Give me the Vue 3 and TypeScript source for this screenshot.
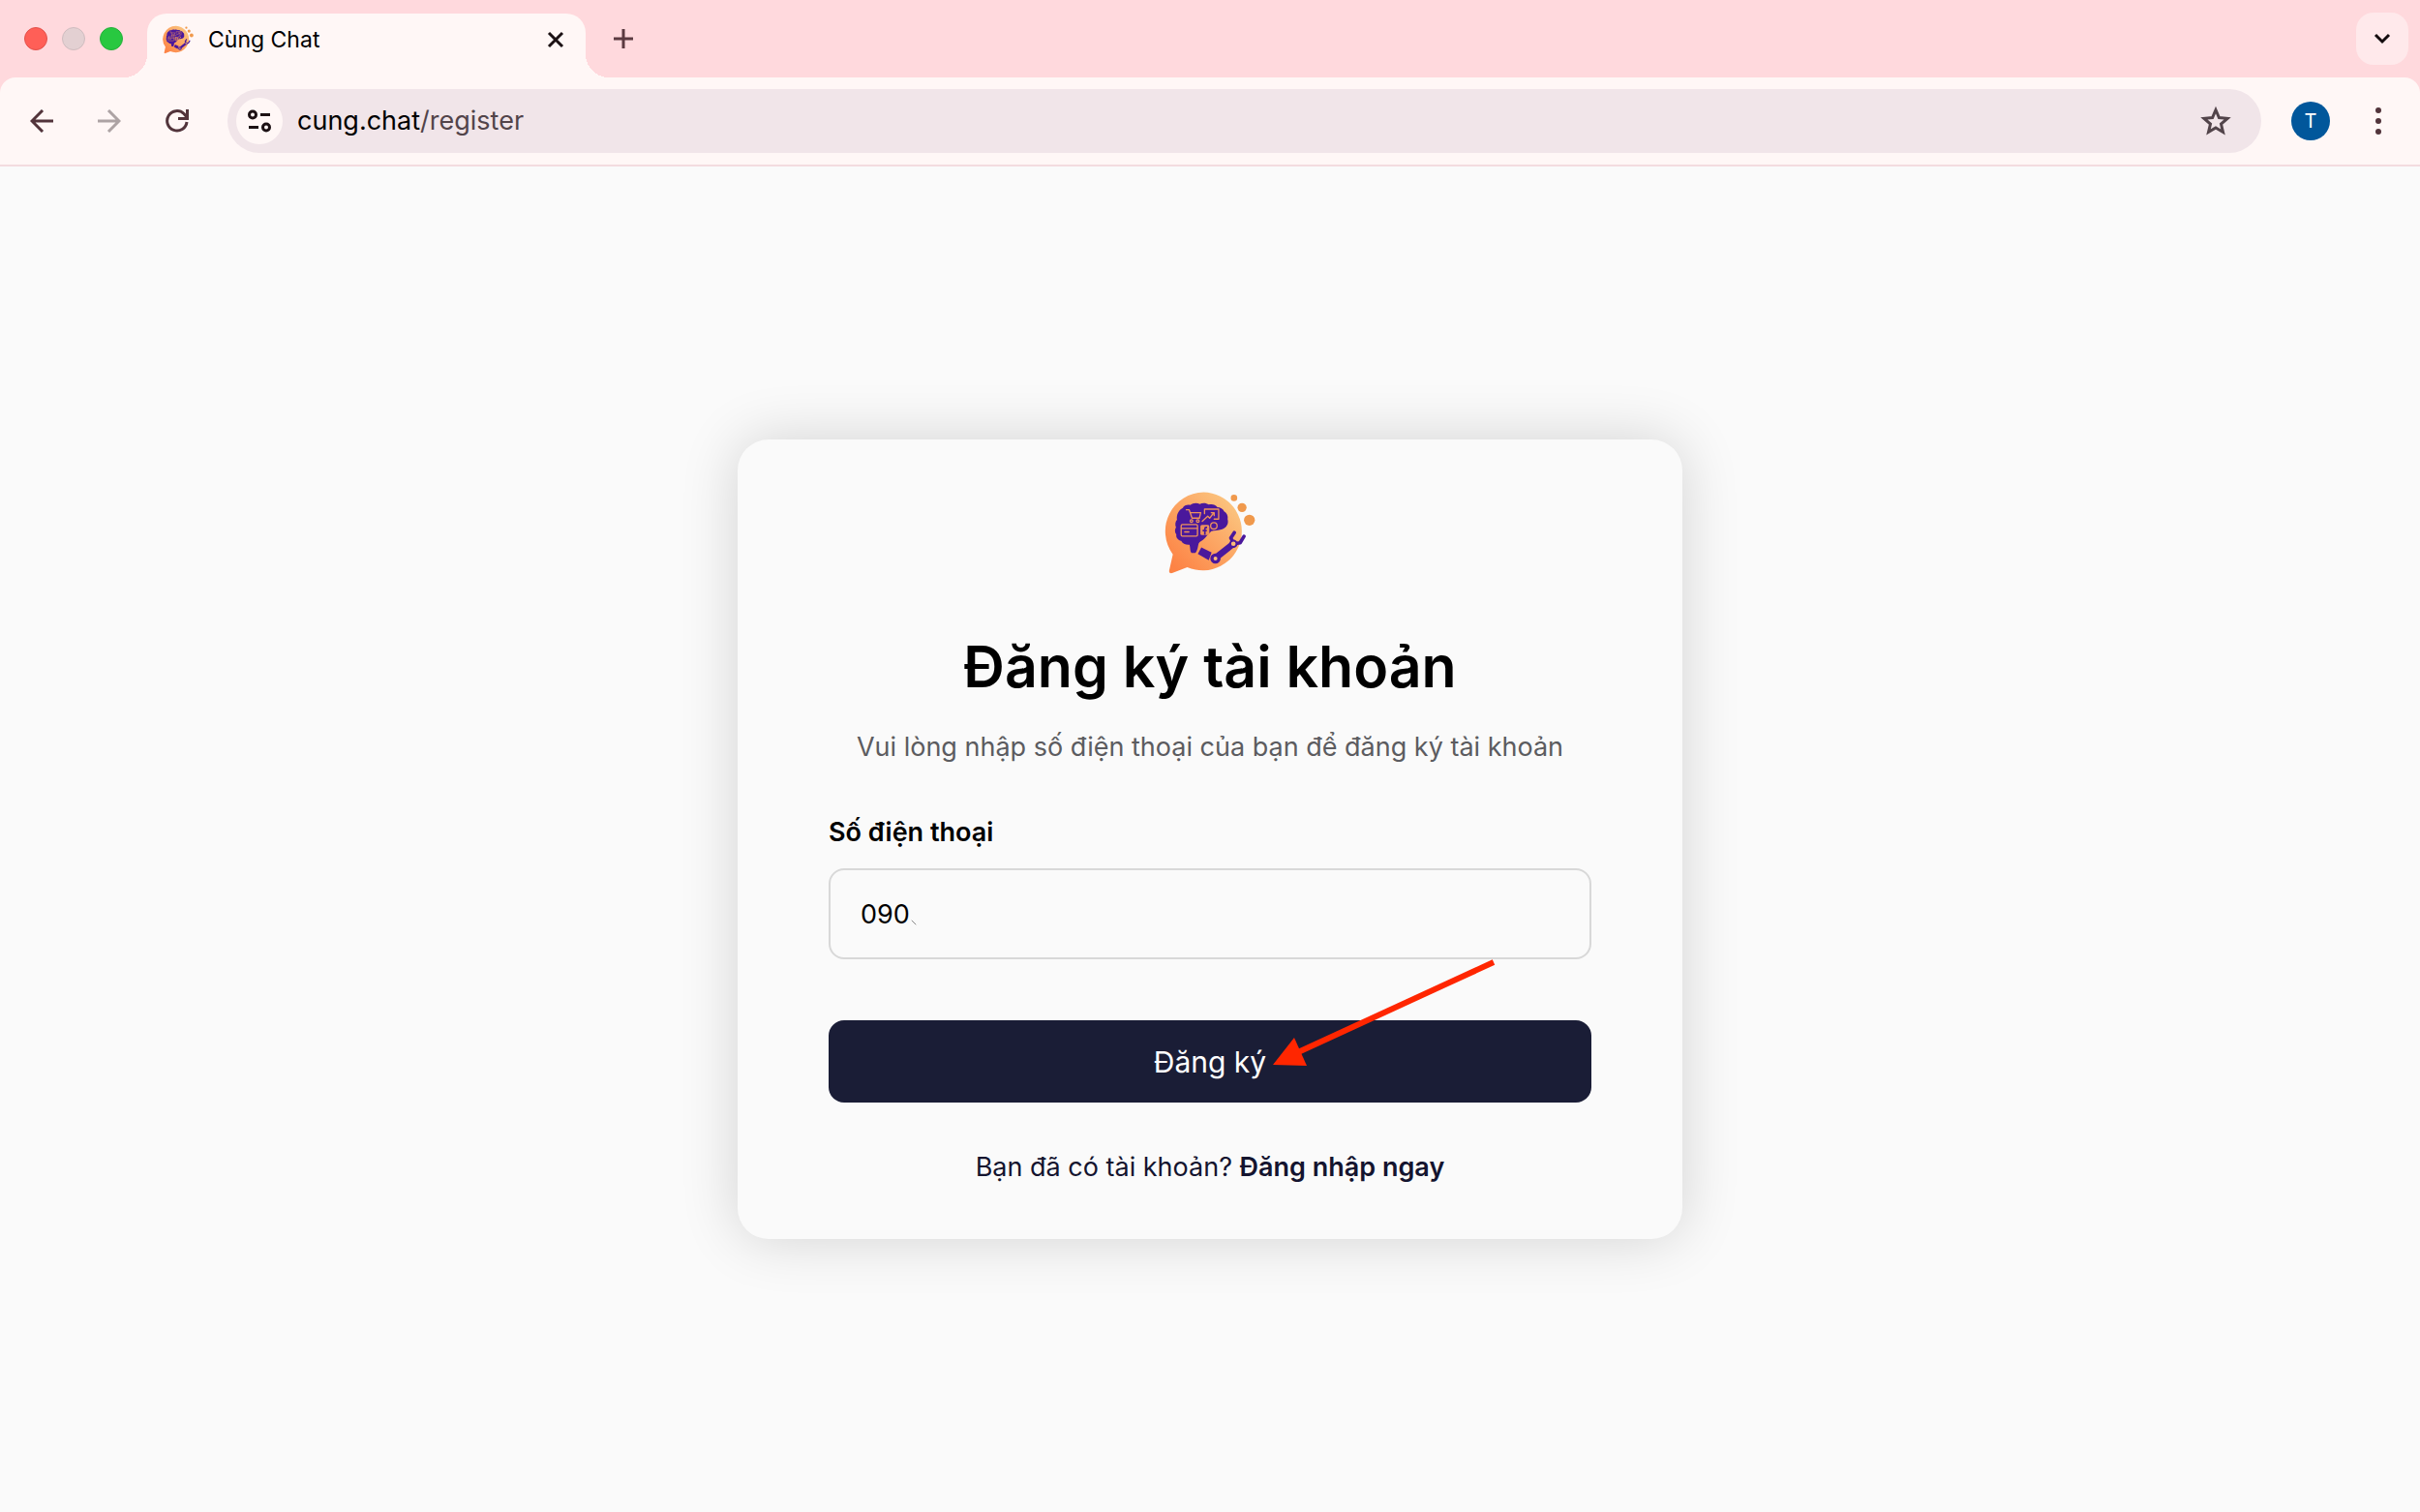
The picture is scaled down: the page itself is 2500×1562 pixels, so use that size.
<script setup lang="ts">
import { ref } from 'vue'

const phone = ref<string>('090')
const url = { host: 'cung.chat', path: '/register' }
</script>

<template>
  <div class="window">
    <svg class="defs" width="0" height="0" aria-hidden="true">
      <defs>
        <linearGradient id="bubble" x1="0" y1="1" x2="1" y2="0">
          <stop offset="0.1" stop-color="#fd8345" />
          <stop offset="0.9" stop-color="#fbc680" />
        </linearGradient>
        <symbol id="logo" viewBox="69 54 284 256">
          <path fill="url(#bubble)" d="M191 55a122 122 0 1 1-51 234l-45 18c-8 3-13-1-11-9l11-49A122 122 0 0 1 191 55z" />
          <g fill="#f0994c">
            <circle cx="286" cy="73" r="10" />
            <circle cx="311" cy="103" r="14" />
            <circle cx="334" cy="142" r="17" />
          </g>
          <path fill="#4a189c" d="M126 104c4-8 14-11 23-9 8-7 22-8 30-3 9-5 21-4 28 2 10-3 22 0 27 8 9 0 18 5 21 13 9 5 13 15 11 25 4 13-3 26-17 31-12 5-25 3-34 6-9 8-17 20-26 27-8 5-14 8-15 18-2 12-5 19-9 23h-12c-5-7-3-17-6-26-11 1-22-3-26-12-10-3-17-11-15-20-6-7-5-16-1-22-4-9-2-19 3-24-2-17 5-30 18-37z" />
          <g fill="none" stroke="#ee925c" stroke-width="4" stroke-linecap="round" stroke-linejoin="round">
            <path d="M137 110h9l9 26h23l4-17h-32" />
            <circle cx="153" cy="145" r="4" />
            <circle cx="173" cy="145" r="4" />
            <path d="M194 122v-14h44v31h-14M187 146l17-16 6 6 12-16M215 119h9v9" />
            <rect x="121" y="156" width="51" height="36" rx="4" />
            <path d="M122 168h49M132 179h13" />
            <circle cx="223" cy="160" r="10" />
          </g>
          <rect x="181" y="157" width="28" height="32" rx="5" fill="#ee925c" />
          <path d="M202 165h-3q-4 0-4 4v19M188 175h13" fill="none" stroke="#4a189c" stroke-width="5" />
          <path fill="#4a189c" d="M184 227l32 16-9 24-34-19z" />
          <g fill="none" stroke="#4a189c">
            <path d="M232 257l48-38" stroke-width="20" />
            <path d="M284 214l-8-16 11-17M286 216l19-3 12-20" stroke-width="11" stroke-linejoin="round" stroke-linecap="round" />
            <circle cx="228" cy="262" r="11" stroke-width="10" fill="#fdbd79" />
            <circle cx="284" cy="216" r="10" stroke-width="6" fill="#fdbd79" />
          </g>
        </symbol>
      </defs>
    </svg>

    <header class="browser">
      <div class="tab-strip">
        <div class="lights">
          <button class="light close" aria-label="Close window"></button>
          <button class="light minimise" aria-label="Minimise window"></button>
          <button class="light zoom" aria-label="Zoom window"></button>
        </div>
        <div class="tab">
          <svg class="favicon" aria-hidden="true"><use href="#logo" /></svg>
          <span class="tab-title">Cùng Chat</span>
          <button class="icon-button" aria-label="Close tab">
            <svg width="18" height="18" viewBox="0 0 18 18"><path d="M2 2l14 14M16 2L2 16" stroke="#1c1114" stroke-width="3" /></svg>
          </button>
        </div>
        <button class="icon-button new-tab" aria-label="New tab">
          <svg width="20" height="20" viewBox="0 0 20 20"><path d="M10 0v20M0 10h20" stroke="#5b3a41" stroke-width="3" /></svg>
        </button>
        <button class="icon-button tab-search" aria-label="Search tabs">
          <svg width="18" height="12" viewBox="0 0 18 12"><path d="M2 2l7 7 7-7" fill="none" stroke="#140c0e" stroke-width="3" /></svg>
        </button>
      </div>

      <nav class="toolbar">
        <button class="icon-button nav-button" aria-label="Back">
          <svg width="24" height="24" viewBox="0 0 24 24"><path d="M24 12H2M13 1L2 12l11 11" fill="none" stroke="#52343b" stroke-width="3" /></svg>
        </button>
        <button class="icon-button nav-button" aria-label="Forward">
          <svg width="24" height="24" viewBox="0 0 24 24"><path d="M0 12h22M11 1l11 11-11 11" fill="none" stroke="#ada3a4" stroke-width="3" /></svg>
        </button>
        <button class="icon-button nav-button" aria-label="Reload">
          <svg width="24" height="24" viewBox="0 0 24 24"><path d="M22 13a10.200 10.200 0 1 1-3-8.500L22 8M22.500 0v9.500H13" fill="none" stroke="#52343b" stroke-width="3" /></svg>
        </button>
        <div class="omnibox">
          <button class="icon-button site-info" aria-label="Site information">
            <svg width="24" height="24" viewBox="0 0 24 24" fill="none" stroke="#1c1114" stroke-width="3">
              <circle cx="5" cy="5.500" r="3.500" /><path d="M13 5.500h10M1 18.500h10" /><circle cx="19" cy="18.500" r="3.500" />
            </svg>
          </button>
          <span class="url">{{ url.host }}<span class="path">{{ url.path }}</span></span>
          <button class="icon-button" aria-label="Bookmark this tab">
            <svg width="32" height="32" viewBox="0 0 32 32"><path d="M16 4.500l3.400 8 8.700.8-6.600 5.700 2 8.500-7.500-4.500-7.500 4.500 2-8.500-6.600-5.700 8.700-.8z" fill="none" stroke="#52444a" stroke-width="3" /></svg>
          </button>
        </div>
        <button class="avatar" aria-label="Profile">T</button>
        <button class="icon-button menu" aria-label="Menu">
          <svg width="8" height="28" viewBox="0 0 8 28" fill="#52343b"><circle cx="4" cy="3" r="3" /><circle cx="4" cy="14" r="3" /><circle cx="4" cy="25" r="3" /></svg>
        </button>
      </nav>
    </header>

    <main class="page">
      <form class="card" @submit.prevent>
        <svg class="logo" role="img" aria-label="Cùng Chat"><use href="#logo" /></svg>
        <h1>Đăng ký tài khoản</h1>
        <p class="lead">Vui lòng nhập số điện thoại của bạn để đăng ký tài khoản</p>
        <label for="phone">Số điện thoại</label>
        <div class="field">
          <input id="phone" v-model="phone" type="tel" />
          <svg class="stroke-mark" viewBox="0 0 6 6" aria-hidden="true"><path d="M1 1l4 4" stroke="#888" stroke-width="1" stroke-linecap="round" /></svg>
        </div>
        <div class="action">
          <button class="submit" type="submit">Đăng ký</button>
          <svg class="arrow" viewBox="0 0 236 112" aria-hidden="true">
            <path d="M230 4L28 97" stroke="#ff2600" stroke-width="6" />
            <path d="M2 110l22-28 13 29z" fill="#ff2600" />
          </svg>
        </div>
        <p class="login">Bạn đã có tài khoản? <a href="#login">Đăng nhập ngay</a></p>
      </form>
    </main>
  </div>
</template>

<style>
body {
  margin: 0;
  background: #fafafa;
}
</style>

<style scoped>
.window {
  display: flex;
  flex-direction: column;
  min-height: 100vh;
  font-family: Inter, "Noto Sans", sans-serif;
  color: #000;
}
.window * {
  box-sizing: border-box;
}
.defs {
  position: absolute;
}
svg {
  display: block;
  flex: none;
}
button {
  padding: 0;
  border: 0;
  background: none;
  font: inherit;
  color: inherit;
}
.icon-button {
  display: flex;
  align-items: center;
  justify-content: center;
  flex: none;
}

.browser {
  background: #ffd9dd;
}
.tab-strip {
  display: flex;
  align-items: center;
  height: 80px;
  padding: 0 12px 0 25px;
}
.lights {
  display: flex;
  gap: 15px;
  margin-right: 25px;
}
.light {
  width: 24px;
  height: 24px;
  border: 1px solid;
  border-radius: 50%;
}
.light.close {
  background: #ff5f57;
  border-color: #e2514b;
}
.light.minimise {
  background: #e3d0d2;
  border-color: #cfbcbf;
}
.light.zoom {
  background: #28c840;
  border-color: #24b039;
}
.tab {
  position: relative;
  display: flex;
  align-items: center;
  align-self: flex-end;
  width: 453px;
  height: 66px;
  padding: 0 22px 12px 16px;
  border-radius: 20px 20px 0 0;
  background: #fff7f6;
}
.tab::before,
.tab::after {
  content: "";
  position: absolute;
  bottom: 0;
  width: 24px;
  height: 24px;
}
.tab::before {
  right: 100%;
  background: radial-gradient(circle at 0 0, transparent 24px, #fff7f6 24px);
}
.tab::after {
  left: 100%;
  background: radial-gradient(circle at 100% 0, transparent 24px, #fff7f6 24px);
}
.favicon {
  width: 32px;
  height: 32px;
}
.tab-title {
  flex: 1;
  margin-left: 15px;
  font-size: 23px;
  line-height: 32px;
}
.new-tab {
  width: 54px;
  height: 54px;
  margin-left: 12px;
}
.tab-search {
  width: 54px;
  height: 54px;
  margin-left: auto;
  border-radius: 18px;
  background: #ffe9eb;
}
.toolbar {
  display: flex;
  align-items: center;
  height: 92px;
  padding: 0 16px;
  border-bottom: 2px solid #f3dcdf;
  border-radius: 16px 16px 0 0;
  background: #fff7f6;
}
.nav-button {
  width: 54px;
  height: 54px;
  margin-right: 16px;
}
.omnibox {
  display: flex;
  align-items: center;
  flex: 1;
  height: 66px;
  margin-left: 9px;
  padding: 0 31px 0 9px;
  border-radius: 33px;
  background: #f1e5e9;
}
.site-info {
  width: 48px;
  height: 48px;
  border-radius: 50%;
  background: #fff7f6;
}
.url {
  flex: 1;
  margin-left: 15px;
  font-size: 27px;
  line-height: 40px;
}
.path {
  color: #52444a;
}
.avatar {
  width: 40px;
  height: 40px;
  margin-left: 31px;
  border-radius: 50%;
  background: #01579b;
  color: #fff;
  font-size: 20px;
}
.menu {
  width: 54px;
  height: 54px;
  margin-left: 23px;
}

.page {
  display: flex;
  flex: 1;
  align-items: center;
  justify-content: center;
  padding: 32px;
}
.card {
  display: flex;
  flex-direction: column;
  width: 100%;
  max-width: 976px;
  padding: 54px 94px;
  border-radius: 32px;
  background: #fafafa;
  box-shadow: 0 0 60px rgba(0, 0, 0, 0.16);
}
.logo {
  align-self: center;
  width: 94px;
  height: 85px;
}
h1 {
  margin: 60px 0 0;
  font-size: 59px;
  font-weight: 600;
  line-height: 72px;
  text-align: center;
}
.lead {
  margin: 27px 0 48px;
  font-size: 27px;
  line-height: 40px;
  text-align: center;
  color: #5c5c60;
}
label {
  font-size: 27px;
  font-weight: 600;
  line-height: 40px;
}
.field {
  position: relative;
  margin-top: 17px;
}
input {
  display: block;
  width: 100%;
  height: 94px;
  padding: 0 31px;
  border: 2px solid #d8d8d8;
  border-radius: 16px;
  background: transparent;
  font: inherit;
  font-size: 27px;
  color: #000;
  outline: none;
}
.stroke-mark {
  position: absolute;
  left: 85px;
  top: 53px;
  width: 6px;
  height: 6px;
}
.action {
  position: relative;
  margin-top: 63px;
}
.submit {
  display: block;
  width: 100%;
  height: 85px;
  border-radius: 16px;
  background: #1a1d36;
  font-size: 30px;
  color: #fff;
}
.arrow {
  position: absolute;
  left: calc(50% + 63px);
  top: -64px;
  width: 236px;
  height: 112px;
}
.login {
  margin: 47px 0 0;
  font-size: 27px;
  line-height: 40px;
  text-align: center;
  color: #14142f;
}
.login a {
  font-weight: 600;
  color: inherit;
  text-decoration: none;
}
</style>
